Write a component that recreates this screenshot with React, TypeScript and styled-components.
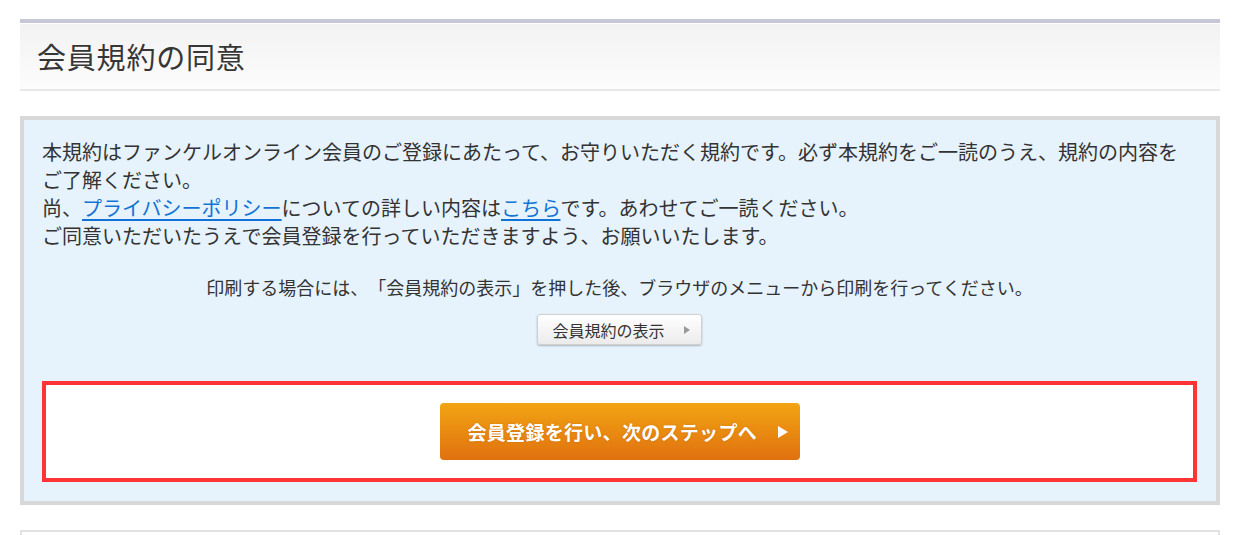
import React from 'react';
import styled, { createGlobalStyle } from 'styled-components';

const text    = '#333333';
const link    = '#1273d6';
const panelBg = '#e6f2fc';
const panelBd = '#d8d8d8';
const alert   = '#ff3535';

const GlobalStyle = createGlobalStyle`
    html, body {
        margin: 0;
        background: #fff;
        font-family: "Noto Sans CJK JP", "Noto Sans", sans-serif;
        color: ${text};
        text-spacing-trim: space-all;
    }
`;

// ── Layout ────────────────────────────────────────────────────────────────────

const Page = styled.div`
    width: 1200px;
    padding: 19px 0 0 20px;
`;

// ── Heading ───────────────────────────────────────────────────────────────────

const Heading = styled.div`
    height: 66px;
    border-top: 4px solid #c6c9d5;
    border-bottom: 2px solid #e8e8e8;
    background: linear-gradient(#f2f2f2, #fcfcfc);
    box-shadow: inset 0 1px 0 #ffffff;
    display: flex;
    align-items: center;
    padding: 0 17px;
`;

const Title = styled.h1`
    margin: 0;
    font-size: 29px;
    font-weight: 400;
    color: #363636;
    letter-spacing: 0.8px;
`;

// ── Agreement panel ───────────────────────────────────────────────────────────

const Panel = styled.section`
    margin-top: 25px;
    border: 4px solid ${panelBd};
    background: ${panelBg};
    padding: 18px 19px 19px 18px;
`;

const Lead = styled.p`
    margin: 0;
    font-size: 20px;
    line-height: 28px;
`;

const Link = styled.a`
    color: ${link};
    text-decoration: underline;
    text-underline-offset: 3px;
`;

const PrintNote = styled.p`
    margin: 23px 0 0;
    font-size: 18px;
    line-height: 28px;
    text-align: center;
`;

const ButtonRow = styled.div`
    display: flex;
    justify-content: center;
    margin-top: 13px;
`;

const Arrow = styled.span<{ $color: string; $size: number }>`
    display: inline-block;
    width: 0;
    height: 0;
    border-top: ${p => p.$size}px solid transparent;
    border-bottom: ${p => p.$size}px solid transparent;
    border-left: ${p => Math.round(p.$size * 1.6)}px solid ${p => p.$color};
`;

const ShowButton = styled.button`
    height: 31px;
    padding: 0 11px 0 14px;
    display: flex;
    align-items: center;
    gap: 19px;
    font-family: inherit;
    font-size: 16px;
    color: ${text};
    background: linear-gradient(#ffffff, #ebebeb);
    border: 1px solid #d0d0d0;
    border-radius: 3px;
    box-shadow: 0 1px 2px rgba(0, 0, 0, 0.25);
    cursor: pointer;
`;

const Highlight = styled.div`
    margin-top: 36px;
    border: 4px solid ${alert};
    background: #fff;
    padding: 18px;
    display: flex;
    justify-content: center;
`;

const NextButton = styled.button`
    width: 360px;
    height: 57px;
    padding: 0 12px 0 28px;
    display: flex;
    align-items: center;
    justify-content: space-between;
    font-family: inherit;
    font-size: 19px;
    font-weight: 700;
    color: #fff;
    text-shadow: 0 0 2px rgba(150, 70, 0, 0.35);
    background: linear-gradient(#f2a413, #e0710f);
    border: none;
    border-radius: 4px;
    cursor: pointer;
`;

const NextLabel = styled.span`
    letter-spacing: 0.3px;
`;

// ── Following section ─────────────────────────────────────────────────────────

const NextSection = styled.div`
    margin-top: 25px;
    height: 4px;
    border: 2px solid #e2e2e2;
    border-bottom: none;
`;

// ── Component ─────────────────────────────────────────────────────────────────

function App() {
    return (
        <Page>
            <GlobalStyle />
            <Heading>
                <Title>会員規約の同意</Title>
            </Heading>

            <Panel>
                <Lead>
                    本規約はファンケルオンライン会員のご登録にあたって、お守りいただく規約です。必ず本規約をご一読のうえ、規約の内容をご了解ください。
                    <br />
                    尚、<Link href="#">プライバシーポリシー</Link>についての詳しい内容は<Link href="#">こちら</Link>です。あわせてご一読ください。
                    <br />
                    ご同意いただいたうえで会員登録を行っていただきますよう、お願いいたします。
                </Lead>

                <PrintNote>印刷する場合には、「会員規約の表示」を押した後、ブラウザのメニューから印刷を行ってください。</PrintNote>

                <ButtonRow>
                    <ShowButton type="button">
                        会員規約の表示
                        <Arrow $color="#9a9a9a" $size={4} />
                    </ShowButton>
                </ButtonRow>

                <Highlight>
                    <NextButton type="button">
                        <NextLabel>会員登録を行い、次のステップへ</NextLabel>
                        <Arrow $color="#ffffff" $size={6} />
                    </NextButton>
                </Highlight>
            </Panel>

            <NextSection />
        </Page>
    );
}

export default App;
